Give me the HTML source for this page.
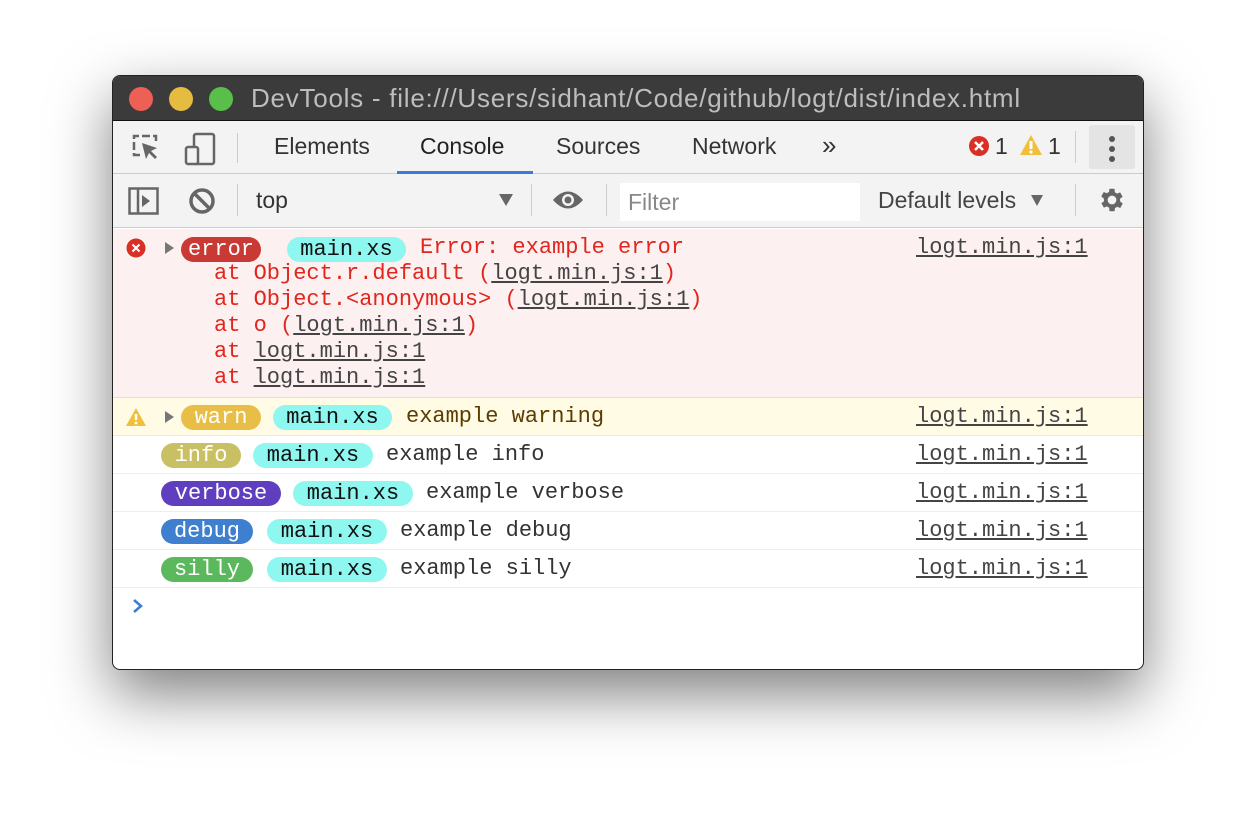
<!DOCTYPE html><html><head><style>
*{margin:0;padding:0;box-sizing:border-box}
body{width:1256px;height:818px;background:#fff;position:relative;overflow:hidden;font-family:"Liberation Sans",sans-serif}
.win{position:absolute;left:112px;top:75px;width:1032px;height:595px;border-radius:8px;border:1px solid #222;overflow:hidden;background:#fff;box-shadow:0 24px 60px rgba(0,0,0,.5)}
.title{position:absolute;left:0;top:0;width:100%;height:45px;background:#3b3b3b;border-bottom:1px solid #111}
.dot{position:absolute;top:11px;width:24px;height:24px;border-radius:50%}
.ttext{position:absolute;left:138px;top:7px;font-size:26px;letter-spacing:0.75px;color:#bdbdbd;white-space:nowrap}
.tabs{position:absolute;left:0;top:45px;width:100%;height:53px;background:#f3f3f3;border-bottom:1px solid #ccc}
.tab{position:absolute;top:12px;font-size:23px;color:#333}
.tb{position:absolute;left:0;top:98px;width:100%;height:54px;background:#f3f3f3;border-bottom:1px solid #ccc}
.sep{position:absolute;width:1px;background:#ccc}
.a{position:absolute}
.mono{font-family:"Liberation Mono",monospace;font-size:22px;white-space:pre}
.row{position:absolute;left:0;width:100%}
.b{position:absolute;height:25px;border-radius:13px;line-height:25px;text-align:center;color:#fff;font-family:"Liberation Mono",monospace;font-size:22px}
.m{background:#8ef7ef;color:#111}
.lk{position:absolute;left:803px;color:#444;text-decoration:underline}
u{color:#444}
.st{position:absolute;left:101px;color:#e0261d}
</style></head><body>
<div class="win">
<div class="title">
<div class="dot" style="left:16px;background:#ee5f56"></div>
<div class="dot" style="left:56px;background:#e6bc40"></div>
<div class="dot" style="left:96px;background:#5abf4a"></div>
<div class="ttext">DevTools - file:///Users/sidhant/Code/github/logt/dist/index.html</div>
</div>
<div class="tabs">
<svg class="a" style="left:18px;top:12px" width="30" height="30" viewBox="0 0 30 30"><path d="M9 22H3V3h22v6" fill="none" stroke="#666" stroke-width="2.5" stroke-dasharray="8 3"/><path d="M11 10l4 16 3-6 6 6 2-2-6-6 6-3z" fill="#666"/></svg>
<svg class="a" style="left:70px;top:11px" width="34" height="34" viewBox="0 0 34 34"><rect x="11" y="2" width="20" height="30" rx="2" fill="none" stroke="#666" stroke-width="2.5"/><rect x="3" y="15" width="12" height="17" rx="2" fill="#f3f3f3" stroke="#666" stroke-width="2.5"/></svg>
<div class="sep" style="left:124px;top:12px;height:30px"></div>
<div class="tab" style="left:161px">Elements</div>
<div class="tab" style="left:307px;color:#222">Console</div>
<div class="a" style="left:284px;top:50px;width:136px;height:3px;background:#3b7bd8"></div>
<div class="tab" style="left:443px">Sources</div>
<div class="tab" style="left:579px">Network</div>
<div class="tab" style="left:709px;font-size:26px;top:9px">»</div>
<svg class="a" style="left:855px;top:14px" width="22" height="22"><circle cx="11" cy="11" r="10" fill="#d93025"/><path d="M7 7l8 8M15 7l-8 8" stroke="#fff" stroke-width="2.5"/></svg>
<div class="tab" style="left:882px">1</div>
<svg class="a" style="left:906px;top:13px" width="24" height="22"><path d="M12 1L23 21H1z" fill="#f0bf3c"/><path d="M12 7v8" stroke="#fff" stroke-width="3"/><circle cx="12" cy="18" r="1.6" fill="#fff"/></svg>
<div class="tab" style="left:935px">1</div>
<div class="sep" style="left:962px;top:10px;height:32px"></div>
<div class="a" style="left:976px;top:4px;width:46px;height:44px;background:#e4e4e4;border-radius:3px"></div>
<div class="a" style="left:996px;top:15px;width:6px;height:6px;border-radius:50%;background:#555"></div>
<div class="a" style="left:996px;top:25px;width:6px;height:6px;border-radius:50%;background:#555"></div>
<div class="a" style="left:996px;top:35px;width:6px;height:6px;border-radius:50%;background:#555"></div>
</div>
<div class="tb">
<svg class="a" style="left:15px;top:13px" width="32" height="28"><rect x="1.5" y="1.5" width="28" height="25" fill="none" stroke="#666" stroke-width="2.5"/><path d="M10 2v25" stroke="#666" stroke-width="2.5"/><path d="M14 8l8 6-8 6z" fill="#666"/></svg>
<svg class="a" style="left:75px;top:13px" width="28" height="28"><circle cx="14" cy="14" r="11" fill="none" stroke="#666" stroke-width="3.5"/><path d="M6 6l16 16" stroke="#666" stroke-width="3.5"/></svg>
<div class="sep" style="left:124px;top:10px;height:32px"></div>
<div class="tab" style="left:143px;top:13px;color:#333">top</div>
<svg class="a" style="left:385px;top:19px" width="16" height="14"><path d="M1 1h14L8 13z" fill="#666"/></svg>
<div class="sep" style="left:418px;top:10px;height:32px"></div>
<svg class="a" style="left:438px;top:15px" width="34" height="22"><path d="M2 11Q17-6 32 11Q17 28 2 11z" fill="#666"/><circle cx="17" cy="11" r="6" fill="#f3f3f3"/><circle cx="17" cy="11" r="3.5" fill="#666"/></svg>
<div class="sep" style="left:493px;top:10px;height:32px"></div>
<div class="a" style="left:507px;top:9px;width:240px;height:38px;background:#fff"></div>
<div class="tab" style="left:515px;top:15px;color:#888">Filter</div>
<div class="tab" style="left:765px;top:13px;color:#444">Default levels</div>
<svg class="a" style="left:917px;top:20px" width="14" height="12"><path d="M1 1h12L7 12z" fill="#666"/></svg>
<div class="sep" style="left:962px;top:10px;height:32px"></div>
<svg class="a" style="left:984px;top:11px" width="30" height="30" viewBox="0 0 24 24"><path fill="#666" d="M19.4 13a7.5 7.5 0 0 0 0-2l2.1-1.6-2-3.5-2.5 1a7 7 0 0 0-1.7-1L15 3h-4l-.4 2.6a7 7 0 0 0-1.7 1l-2.5-1-2 3.5L6.6 11a7.5 7.5 0 0 0 0 2l-2.1 1.6 2 3.5 2.5-1a7 7 0 0 0 1.7 1L11 21h4l.4-2.6a7 7 0 0 0 1.7-1l2.5 1 2-3.5zM13 15.5a3.5 3.5 0 1 1 0-7 3.5 3.5 0 0 1 0 7z" transform="translate(-1 0)"/></svg>
</div>
<!-- error -->
<div class="row" style="top:153px;height:169px;background:#fdf0f0;border-bottom:1px solid #f5d5d5"></div>
<svg class="a" style="left:13px;top:162px" width="20" height="20"><circle cx="10" cy="10" r="9.5" fill="#d93025"/><path d="M6.5 6.5l7 7M13.5 6.5l-7 7" stroke="#fff" stroke-width="2"/></svg>
<svg class="a" style="left:52px;top:166px" width="10" height="12"><path d="M0 0l9 6-9 6z" fill="#777"/></svg>
<div class="b" style="left:68px;top:161px;width:80px;background:#c93a35">error</div>
<div class="b m" style="left:174px;top:161px;width:119px">main.xs</div>
<div class="a mono" style="left:307px;top:159px;color:#e0261d">Error: example error</div>
<div class="st mono" style="top:185px">at Object.r.default (<u>logt.min.js:1</u>)</div>
<div class="st mono" style="top:211px">at Object.&lt;anonymous&gt; (<u>logt.min.js:1</u>)</div>
<div class="st mono" style="top:237px">at o (<u>logt.min.js:1</u>)</div>
<div class="st mono" style="top:263px">at <u>logt.min.js:1</u></div>
<div class="st mono" style="top:289px">at <u>logt.min.js:1</u></div>
<div class="lk mono" style="top:159px">logt.min.js:1</div>
<!-- warn -->
<div class="row" style="top:322px;height:38px;background:#fffbe5;border-bottom:1px solid #f5ecc0"></div>
<svg class="a" style="left:12px;top:331px" width="22" height="20"><path d="M11 1L21 19H1z" fill="#f0bf3c"/><path d="M11 7v6" stroke="#fff" stroke-width="2.5"/><circle cx="11" cy="16" r="1.4" fill="#fff"/></svg>
<svg class="a" style="left:52px;top:335px" width="10" height="12"><path d="M0 0l9 6-9 6z" fill="#777"/></svg>
<div class="b" style="left:68px;top:329px;width:80px;background:#e9be46">warn</div>
<div class="b m" style="left:160px;top:329px;width:119px">main.xs</div>
<div class="a mono" style="left:293px;top:328px;color:#5c3c00">example warning</div>
<div class="lk mono" style="top:328px">logt.min.js:1</div>
<!-- others -->
<div class="row" style="top:360px;height:38px;border-bottom:1px solid #eee"></div>
<div class="b" style="left:48px;top:367px;width:80px;background:#c8c063">info</div>
<div class="b m" style="left:140px;top:367px;width:120px">main.xs</div>
<div class="a mono" style="left:273px;top:366px;color:#333">example info</div>
<div class="lk mono" style="top:366px">logt.min.js:1</div>
<div class="row" style="top:398px;height:38px;border-bottom:1px solid #eee"></div>
<div class="b" style="left:48px;top:405px;width:120px;background:#5f3fc0">verbose</div>
<div class="b m" style="left:180px;top:405px;width:120px">main.xs</div>
<div class="a mono" style="left:313px;top:404px;color:#333">example verbose</div>
<div class="lk mono" style="top:404px">logt.min.js:1</div>
<div class="row" style="top:436px;height:38px;border-bottom:1px solid #eee"></div>
<div class="b" style="left:48px;top:443px;width:92px;background:#3f7fd0">debug</div>
<div class="b m" style="left:154px;top:443px;width:120px">main.xs</div>
<div class="a mono" style="left:287px;top:442px;color:#333">example debug</div>
<div class="lk mono" style="top:442px">logt.min.js:1</div>
<div class="row" style="top:474px;height:38px;border-bottom:1px solid #eee"></div>
<div class="b" style="left:48px;top:481px;width:92px;background:#5cb85c">silly</div>
<div class="b m" style="left:154px;top:481px;width:120px">main.xs</div>
<div class="a mono" style="left:287px;top:480px;color:#333">example silly</div>
<div class="lk mono" style="top:480px">logt.min.js:1</div>
<svg class="a" style="left:19px;top:522px" width="12" height="16"><path d="M2 2l7 6-7 6" fill="none" stroke="#3b7bd8" stroke-width="2.5"/></svg>
</div>
</body></html>
